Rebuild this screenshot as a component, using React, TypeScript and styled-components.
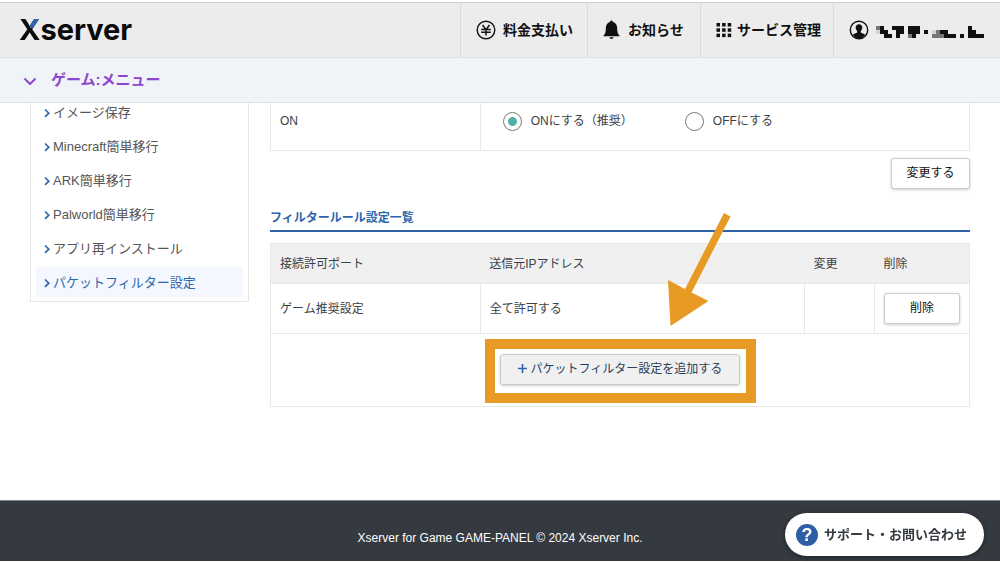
import React from 'react';
import styled, { createGlobalStyle } from 'styled-components';

const GlobalStyle = createGlobalStyle`
  *, *::before, *::after { box-sizing: border-box; }
  body {
    margin: 0;
    background: #fff;
    color: #3c4146;
    font-family: "Liberation Sans", "Noto Sans CJK JP", sans-serif;
    font-size: 12px;
    line-height: 20px;
  }
  button, input { font: inherit; }
  a { color: inherit; text-decoration: none; }
`;

const Page = styled.div`
  display: flex;
  flex-direction: column;
  min-height: 100vh;
  padding: 2px 0 1px;
`;

const TopBar = styled.header`
  position: relative;
  z-index: 2;
  display: flex;
  justify-content: space-between;
  height: 56px;
  background: #ececec;
  border-top: 1px solid #cfcfcf;
  border-bottom: 1px solid #dfe1e3;
`;

const Logo = styled.a`
  display: flex;
  align-items: center;
  padding-left: 19px;
  color: #0b0b0b;
  font-family: Inter, sans-serif;
  font-size: 29px;
  line-height: 32px;
  font-weight: 700;
`;

const LogoInitial = styled.span`
  color: transparent;
  background:
    linear-gradient(135deg, transparent 4px, #2f66ae 4px) 11px 0 / 12px 14px no-repeat,
    #0b0b0b;
  background-clip: text;
  -webkit-background-clip: text;
`;

const TopNav = styled.nav`
  display: flex;
`;

const TopLink = styled.a<{ $width: number; $gap: number }>`
  display: flex;
  align-items: center;
  gap: ${(p) => p.$gap}px;
  width: ${(p) => p.$width}px;
  padding-left: 15px;
  border-left: 1px solid #dadada;
  color: #111;
  font-size: 14px;
  font-weight: 700;
  white-space: nowrap;
`;

const MenuBar = styled.div`
  position: relative;
  z-index: 2;
  height: 45px;
  background: #f0f4f8;
  border-bottom: 1px solid #dce1e5;
`;

const MenuToggle = styled.button`
  display: flex;
  align-items: center;
  gap: 14px;
  height: 44px;
  padding: 0 0 0 23px;
  border: 0;
  background: none;
  color: #8b46cf;
  font-size: 15px;
  font-weight: 700;
`;

const Columns = styled.div`
  display: flex;
  align-items: flex-start;
  gap: 21px;
  margin-top: -6px;
  padding: 0 30px 60px;
`;

const SideMenu = styled.ul`
  display: flex;
  flex-direction: column;
  gap: 4px;
  flex: 0 0 219px;
  margin: 0;
  padding: 0 5px 4px;
  border: 1px solid #e5e5e5;
  border-top: 0;
  list-style: none;
`;

const SideLink = styled.a<{ $active?: boolean }>`
  display: flex;
  align-items: center;
  gap: 3px;
  height: 30px;
  padding: 1px 0 0 8px;
  color: ${(p) => (p.$active ? '#2f66ae' : '#555')};
  background: ${(p) => (p.$active ? '#f4f8fe' : 'transparent')};
  font-size: 13px;
`;

const Content = styled.main`
  flex: 1;
  min-width: 0;
`;

const DataTable = styled.table`
  width: 100%;
  table-layout: fixed;
  border-collapse: collapse;
  border: 1px solid #e8e8e8;
  text-align: left;
`;

const SettingHead = styled.th`
  width: 30%;
  height: 53px;
  padding: 13px 9px 0;
  border-right: 1px solid #e8e8e8;
  font-weight: 400;
  vertical-align: top;
`;

const SettingCell = styled.td`
  padding: 13px 22px 0;
  vertical-align: top;
`;

const Choices = styled.div`
  display: flex;
  gap: 52px;
`;

const Choice = styled.label`
  display: flex;
  align-items: center;
  gap: 9px;
  white-space: nowrap;
`;

const Radio = styled.input`
  appearance: none;
  width: 19px;
  height: 19px;
  margin: 0;
  border: 1px solid #777;
  border-radius: 50%;
  background: #fff;
  &:checked {
    background: radial-gradient(circle, #4fb0a5 0 4px, #fff 5px);
  }
`;

const Actions = styled.div`
  display: flex;
  justify-content: flex-end;
  padding: 7px 0 19px;
`;

const Button = styled.button<{ $width: number; $tone?: 'grey' }>`
  display: inline-flex;
  align-items: center;
  justify-content: center;
  gap: 4px;
  width: ${(p) => p.$width}px;
  height: 31px;
  padding: 0 0 1px;
  border: 1px solid #c9cccf;
  border-radius: 3px;
  background: ${(p) => (p.$tone ? '#f0f0f0' : '#fff')};
  color: ${(p) => (p.$tone ? '#2a3f5c' : '#111')};
  box-shadow: 0 1px 3px rgba(0, 0, 0, 0.2);
  white-space: nowrap;
`;

const SectionTitle = styled.h2`
  margin: 0 0 11px;
  padding-bottom: 2px;
  border-bottom: 2px solid #2f62a6;
  color: #2f66ae;
  font-size: 12px;
  line-height: 20px;
  font-weight: 700;
`;

const RuleHead = styled.th<{ $width?: string }>`
  width: ${(p) => p.$width ?? 'auto'};
  height: 40px;
  padding: 0 9px;
  background: #f0f0f0;
  font-weight: 400;
`;

const RuleCell = styled.td`
  height: 50px;
  padding: 0 9px;
  border: 1px solid #e8e8e8;
`;

const AddCell = styled.td`
  height: 73px;
  padding: 0 0 2px;
`;

const AddArea = styled.div`
  position: relative;
  display: flex;
  width: fit-content;
  margin: 0 auto;
`;

const Highlight = styled.div`
  position: absolute;
  inset: -15px -16px -18px -15px;
  border: 10px solid #e79b25;
  pointer-events: none;
`;

const Arrow = styled.svg`
  position: absolute;
  left: 168px;
  top: -142px;
  pointer-events: none;
`;

const Footer = styled.footer`
  margin-top: auto;
  height: 61px;
  padding-top: 27px;
  border-top: 1px solid #84898c;
  background: #343a40;
  color: #fff;
  text-align: center;
`;

const Support = styled.a`
  position: fixed;
  right: 16px;
  bottom: 6px;
  display: flex;
  align-items: center;
  gap: 6px;
  width: 199px;
  height: 43px;
  padding-left: 11px;
  border-radius: 22px;
  background: #fff;
  color: #343a40;
  box-shadow: 0 1px 5px rgba(0, 0, 0, 0.4);
  font-size: 13px;
  font-weight: 700;
  white-space: nowrap;
`;

const SupportMark = styled.span`
  flex: none;
  width: 22px;
  height: 22px;
  border-radius: 50%;
  background: #2c5fa5;
  color: #fff;
  font-size: 18px;
  line-height: 22px;
  text-align: center;
`;

const YenIcon = () => (
  <svg width="20" height="20" viewBox="0 0 20 20" fill="none" stroke="#111" aria-hidden="true">
    <circle cx="10" cy="10" r="8.800" strokeWidth="1.400" />
    <path d="M6.500 5l3.500 4.800L13.500 5M10 10v5.600M5.200 9.400h9.600M5.200 12.300h9.600" strokeWidth="1.500" />
  </svg>
);

const BellIcon = () => (
  <svg width="17" height="20" viewBox="0 0 17 20" fill="#111" aria-hidden="true">
    <path d="M7.200 1.800a1.300 1.300 0 0 1 2.600 0C12.800 2.600 14.200 5.200 14.200 8.200c0 4 .5 5.600 2.300 7.200v.8H.5v-.8C2.300 13.800 2.800 12.200 2.800 8.200c0-3 1.400-5.600 4.400-6.400z" />
    <path d="M6.500 17.300h4a2 1.700 0 0 1-4 0z" />
  </svg>
);

const GridIcon = () => (
  <svg width="16" height="16" viewBox="0 0 16 16" fill="#111" aria-hidden="true">
    {[0, 1, 2].map((row) =>
      [0, 1, 2].map((col) => (
        <rect key={`${row}${col}`} x={0.5 + col * 5.6} y={1 + row * 5.3} width="3.500" height="3.500" />
      )),
    )}
  </svg>
);

const UserIcon = () => (
  <svg width="20" height="20" viewBox="0 0 20 20" aria-hidden="true">
    <circle cx="10" cy="10" r="8.700" fill="none" stroke="#111" strokeWidth="1.400" />
    <path
      d="M10 4.200c2.100 0 3.300 1.400 3.300 3.400 0 1.500-.6 2.700-1.500 3.400v1.400l4.400 2.100C14.800 17.200 12.600 18.500 10 18.500s-4.800-1.300-6.200-4l4.400-2.100V11c-.9-.7-1.500-1.900-1.500-3.400 0-2 1.200-3.400 3.300-3.400z"
      fill="#111"
    />
  </svg>
);

const mosaic = [
  '+#..###.###............#...',
  '-##..##.###.#.-+##.....##..',
  '..##.#..+#....+++###.#.####',
];
const mosaicTone: Record<string, string> = { '#': '#111', '+': '#777', '-': '#d4d4d4' };

const MaskedName = () => (
  <svg width="108" height="16" viewBox="0 -4 108 16" shapeRendering="crispEdges" role="img" aria-label="アカウント">
    {mosaic.map((line, row) =>
      line.split('').map((c, col) =>
        c === '.' ? null : (
          <rect key={`${row}-${col}`} x={col * 4} y={row * 4} width="4" height="4" fill={mosaicTone[c]} />
        ),
      ),
    )}
  </svg>
);

const Chevron = () => (
  <svg width="14" height="10" viewBox="0 0 14 10" fill="none" stroke="#8b46cf" strokeWidth="2" aria-hidden="true">
    <path d="M1.500 3.500L7 9 12.500 3.500" />
  </svg>
);

const SideArrow = () => (
  <svg width="6" height="10" viewBox="0 0 6 10" fill="none" stroke="#2f66ae" strokeWidth="1.700" aria-hidden="true">
    <path d="M1 1.500l3.800 3.700L1 8.900" />
  </svg>
);

const PlusIcon = () => (
  <svg width="9" height="9" viewBox="0 0 9 9" stroke="#2f66ae" strokeWidth="1.600" aria-hidden="true">
    <path d="M4.500 0v9M0 4.500h9" />
  </svg>
);

const menuItems = [
  'イメージ保存',
  'Minecraft簡単移行',
  'ARK簡単移行',
  'Palworld簡単移行',
  'アプリ再インストール',
  'パケットフィルター設定',
];

export default function App() {
  return (
    <>
      <GlobalStyle />
      <Page>
        <TopBar>
          <Logo href="#">
            <LogoInitial>X</LogoInitial>server
          </Logo>
          <TopNav>
            <TopLink href="#" $width={127} $gap={7}><YenIcon />料金支払い</TopLink>
            <TopLink href="#" $width={113} $gap={8}><BellIcon />お知らせ</TopLink>
            <TopLink href="#" $width={133} $gap={5}><GridIcon />サービス管理</TopLink>
            <TopLink href="#" $width={167} $gap={7}><UserIcon /><MaskedName /></TopLink>
          </TopNav>
        </TopBar>
        <MenuBar>
          <MenuToggle type="button"><Chevron />ゲーム:メニュー</MenuToggle>
        </MenuBar>
        <Columns>
          <SideMenu>
            {menuItems.map((item, i) => (
              <li key={item}>
                <SideLink href="#" $active={i === menuItems.length - 1}><SideArrow />{item}</SideLink>
              </li>
            ))}
          </SideMenu>
          <Content>
            <DataTable>
              <tbody>
                <tr>
                  <SettingHead scope="row">ON</SettingHead>
                  <SettingCell>
                    <Choices>
                      <Choice><Radio type="radio" name="filter" defaultChecked />ONにする（推奨）</Choice>
                      <Choice><Radio type="radio" name="filter" />OFFにする</Choice>
                    </Choices>
                  </SettingCell>
                </tr>
              </tbody>
            </DataTable>
            <Actions>
              <Button type="button" $width={79}>変更する</Button>
            </Actions>
            <SectionTitle>フィルタールール設定一覧</SectionTitle>
            <DataTable>
              <thead>
                <tr>
                  <RuleHead $width="30%">接続許可ポート</RuleHead>
                  <RuleHead>送信元IPアドレス</RuleHead>
                  <RuleHead $width="70px">変更</RuleHead>
                  <RuleHead $width="95px">削除</RuleHead>
                </tr>
              </thead>
              <tbody>
                <tr>
                  <RuleCell>ゲーム推奨設定</RuleCell>
                  <RuleCell>全て許可する</RuleCell>
                  <RuleCell />
                  <RuleCell><Button type="button" $width={76}>削除</Button></RuleCell>
                </tr>
                <tr>
                  <AddCell colSpan={4}>
                    <AddArea>
                      <Button type="button" $width={240} $tone="grey"><PlusIcon />パケットフィルター設定を追加する</Button>
                      <Highlight />
                      <Arrow width="64" height="115" viewBox="0 0 64 115" aria-hidden="true">
                        <path d="M56 1l6.500 3.500L23.500 80.500 40.500 89 2.500 114 0 68l17 9z" fill="#e79b25" />
                      </Arrow>
                    </AddArea>
                  </AddCell>
                </tr>
              </tbody>
            </DataTable>
          </Content>
        </Columns>
        <Footer>Xserver for Game GAME-PANEL © 2024 Xserver Inc.</Footer>
      </Page>
      <Support href="#"><SupportMark>?</SupportMark>サポート・お問い合わせ</Support>
    </>
  );
}
